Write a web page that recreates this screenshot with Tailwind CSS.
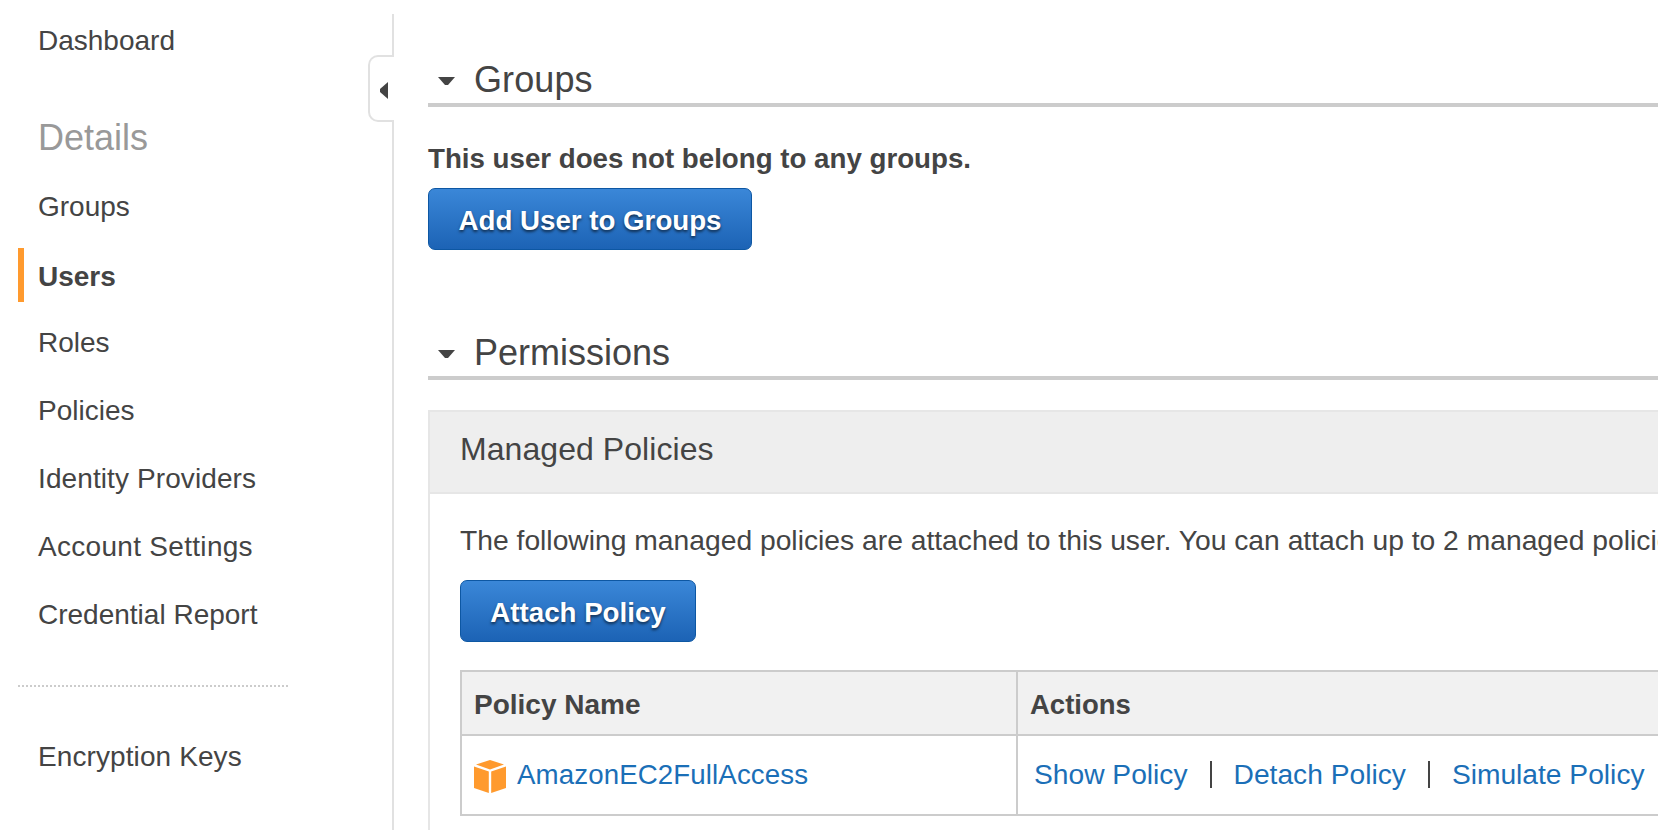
<!DOCTYPE html>
<html>
<head>
<meta charset="utf-8">
<script src="https://cdn.jsdelivr.net/npm/@tailwindcss/browser@4"></script>
</head>
<body class="bg-white">
<div class="flex w-[1658px] h-[830px] overflow-hidden bg-white text-[#444] font-['Liberation_Sans',Arial,sans-serif]">
  <!-- Sidebar -->
  <aside class="relative w-[394px] shrink-0 mt-[14px] border-r-2 border-[#e1e1e1]">
    <nav class="flex flex-col text-[28px] -mt-[14px] pl-[38px]">
      <a class="flex items-center h-[68px] mt-[7px]">Dashboard</a>
      <h2 class="flex items-center h-[50px] mt-[38px] text-[36px] text-[#999]">Details</h2>
      <a class="flex items-center h-[68px] mt-[10px]">Groups</a>
      <a class="relative flex items-center h-[68px] pt-[4px] font-bold">Users<span class="absolute left-[-20px] top-[7px] w-[6px] h-[54px] bg-[#ff9a2e]"></span></a>
      <a class="flex items-center h-[68px]">Roles</a>
      <a class="flex items-center h-[68px]">Policies</a>
      <a class="flex items-center h-[68px] tracking-[0.1px]">Identity Providers</a>
      <a class="flex items-center h-[68px] tracking-[0.3px]">Account Settings</a>
      <a class="flex items-center h-[68px]">Credential Report</a>
      <div class="w-[270px] -ml-[20px] mt-[36px] border-t-2 border-dotted border-[#ccc]"></div>
      <a class="flex items-center h-[68px] mt-[36px] tracking-[0.1px]">Encryption Keys</a>
    </nav>
    <button class="absolute right-[-2px] top-[41px] flex items-center justify-center w-[26px] h-[67px] pl-[4px] pt-[3px] bg-white border-2 border-r-0 border-[#e1e1e1] rounded-l-[10px]">
      <svg width="10" height="17" viewBox="0 0 10 17"><path d="M9 0V17L1 10V7Z" fill="#444"/></svg>
    </button>
  </aside>
  <!-- Main -->
  <main class="flex-1 min-w-0 pl-[34px] pt-[59px] overflow-hidden">
    <section>
      <div class="flex items-center h-[48px] border-b-4 border-[#ccc]">
        <svg class="ml-[10px] mr-[19px]" width="17" height="9" viewBox="0 0 17 9"><path d="M0 0H17L10 8H7Z" fill="#444"/></svg>
        <h2 class="text-[36px] leading-none pb-[2px] tracking-[0.1px]">Groups</h2>
      </div>
      <p class="mt-[34px] text-[27.7px] font-bold leading-[36px] whitespace-nowrap">This user does not belong to any groups.</p>
      <button class="block mt-[11px] h-[62px] w-[324px] pt-[4px] rounded-[7px] border border-[#0d57a3] bg-linear-to-b from-[#3a87d8] to-[#1c63b5] text-white text-[27.7px] font-bold [text-shadow:0_2px_3px_rgba(0,0,0,0.6)]">Add User to Groups</button>
    </section>
    <section class="mt-[82px]">
      <div class="flex items-center h-[48px] border-b-4 border-[#ccc]">
        <svg class="ml-[10px] mr-[19px]" width="17" height="9" viewBox="0 0 17 9"><path d="M0 0H17L10 8H7Z" fill="#444"/></svg>
        <h2 class="text-[36px] leading-none pb-[2px]">Permissions</h2>
      </div>
      <div class="mt-[30px] pb-[100px] border-2 border-r-0 border-b-0 border-[#e6e6e6]">
        <div class="flex items-center h-[82px] pl-[30px] pb-[6px] bg-[#eee] border-b-2 border-[#e6e6e6] text-[32px] tracking-[0.06px]">Managed Policies</div>
        <div class="pl-[30px] pt-[28px]">
          <p class="text-[28.25px] leading-[36px] whitespace-nowrap">The following managed policies are attached to this user. You can attach up to 2 managed policies.</p>
          <button class="block mt-[22px] h-[62px] w-[236px] pt-[3px] rounded-[7px] border border-[#0d57a3] bg-linear-to-b from-[#3a87d8] to-[#1c63b5] text-white text-[27.7px] font-bold [text-shadow:0_2px_3px_rgba(0,0,0,0.6)]">Attach Policy</button>
          <div class="mt-[28px] border-2 border-r-0 border-[#ccc] text-[27.7px]">
            <div class="flex h-[64px] bg-[#f1f1f1] border-b-2 border-[#ccc] font-bold">
              <div class="flex items-center w-[556px] pl-[12px] pt-[3px] text-[28px] border-r-2 border-[#ccc]">Policy Name</div>
              <div class="flex items-center pl-[12px] pt-[3px] text-[27.5px]">Actions</div>
            </div>
            <div class="flex h-[78px]">
              <div class="flex items-center w-[556px] pl-[12px] border-r-2 border-[#ccc] text-[#1b6fb7]">
                <svg class="mr-[11px] mt-[2px]" width="32" height="33" viewBox="0 0 32 33"><path d="M16 0 30 4.500 16 9.500 2 4.500Z" fill="#ff9a2e"/><path d="M0 6.500 14.800 11.500V33L0 28Z" fill="#ff9a2e"/><path d="M32 6.500 17.200 11.500V33L32 28Z" fill="#ff9a2e"/></svg>
                <span class="tracking-[0.1px]">AmazonEC2FullAccess</span>
              </div>
              <div class="flex items-center pl-[16px] pb-[2px] text-[28.2px] text-[#1b6fb7] whitespace-nowrap">
                <a>Show Policy</a>
                <span class="mx-[22px] w-[2px] h-[27px] bg-[#444]"></span>
                <a>Detach Policy</a>
                <span class="mx-[22px] w-[2px] h-[27px] bg-[#444]"></span>
                <a>Simulate Policy</a>
              </div>
            </div>
          </div>
        </div>
      </div>
    </section>
  </main>
</div>
</body>
</html>
